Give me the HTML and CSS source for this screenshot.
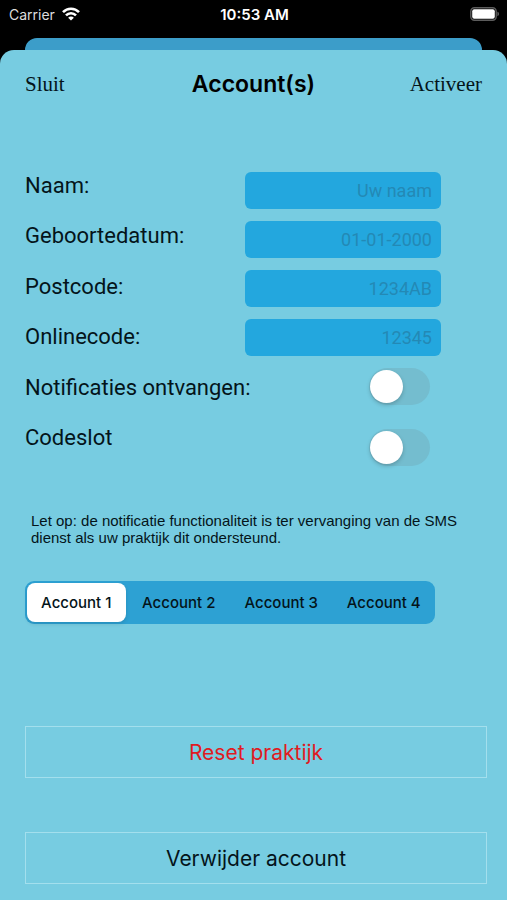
FILE: index.html
```
<!DOCTYPE html>
<html lang="nl">
<head>
  <meta charset="UTF-8">
  <meta name="viewport" content="width=device-width, initial-scale=1.0">
  <title>Account(s)</title>
  <link rel="stylesheet" href="styles.css">
</head>
<body>
  <div class="status-bar">
    <div class="carrier">
      <span>Carrier</span>
      <svg class="wifi" viewBox="0 0 18 14" width="18" height="14" fill="none" stroke="#fff" stroke-width="2.6">
        <path d="M1 5.2 C5.4 0.6 12.6 0.6 17 5.2" />
        <path d="M4 8.4 C6.8 5.5 11.2 5.5 14 8.4" />
        <path d="M9 13.6 L6.1 10.7 C7.7 9.2 10.3 9.2 11.9 10.7 Z" fill="#fff" stroke="none" />
      </svg>
    </div>
    <div class="time">10:53 AM</div>
    <svg class="battery" viewBox="0 0 30 14" width="30" height="14">
      <rect x="0.8" y="0.8" width="25.4" height="12.4" rx="3.6" fill="none" stroke="#5c5c5c" stroke-width="1.4" />
      <rect x="2.2" y="2.2" width="22.6" height="9.6" rx="2" fill="#fff" />
      <path d="M27.4 4.8 C29.6 5.4 29.6 8.6 27.4 9.2 Z" fill="#5c5c5c" />
    </svg>
  </div>

  <div class="sheet-behind"></div>

  <main class="sheet">
    <header class="nav">
      <button class="nav-btn" type="button">Sluit</button>
      <h1>Account(s)</h1>
      <button class="nav-btn nav-right" type="button">Activeer</button>
    </header>

    <form class="account-form">
      <div class="labels">
        <label for="naam">Naam:</label>
        <label for="geboortedatum">Geboortedatum:</label>
        <label for="postcode">Postcode:</label>
        <label for="onlinecode">Onlinecode:</label>
        <label for="notificaties">Notificaties ontvangen:</label>
        <label for="codeslot">Codeslot</label>
      </div>
      <div class="controls">
        <input class="field" type="text" id="naam" placeholder="Uw naam">
        <input class="field" type="text" id="geboortedatum" placeholder="01-01-2000">
        <input class="field" type="text" id="postcode" placeholder="1234AB">
        <input class="field" type="text" id="onlinecode" placeholder="12345">
        <div class="switches">
          <input class="switch" type="checkbox" id="notificaties">
          <input class="switch" type="checkbox" id="codeslot">
        </div>
      </div>
    </form>

    <p class="note">Let op: de notificatie functionaliteit is ter vervanging van de SMS dienst als uw praktijk dit ondersteund.</p>

    <div class="segments">
      <label class="segment"><input type="radio" name="account" checked><span>Account 1</span></label>
      <label class="segment"><input type="radio" name="account"><span>Account 2</span></label>
      <label class="segment"><input type="radio" name="account"><span>Account 3</span></label>
      <label class="segment"><input type="radio" name="account"><span>Account 4</span></label>
    </div>

    <div class="actions">
      <button class="action danger" type="button">Reset praktijk</button>
      <button class="action" type="button">Verwijder account</button>
    </div>
  </main>
</body>
</html>
```

FILE: styles.css
```
* {
  box-sizing: border-box;
}
body {
  margin: 0;
  min-height: 100vh;
  display: flex;
  flex-direction: column;
  font-family: Inter, sans-serif;
  background-color: #000;
  color: #04141a;
}
button, input {
  font-family: inherit;
  color: inherit;
}

/* Status bar */
.status-bar {
  display: grid;
  grid-template-columns: 1fr auto 1fr;
  align-items: center;
  height: 28px;
  margin-bottom: 10px;
  padding: 0 7px 0 9px;
  color: #fff;
  font-size: 14px;
}
.carrier {
  display: flex;
  align-items: center;
  gap: 7px;
  color: #ddd;
}
.time {
  font-size: 15px;
  font-weight: 600;
}
.battery {
  justify-self: end;
}

/* Sheets */
.sheet-behind {
  height: 12px;
  margin: 0 25px;
  background: #3c9dc9;
  border-radius: 12px 12px 0 0;
}
.sheet {
  flex: 1;
  padding: 16px 20px 15px 25px;
  background: #77cce1;
  border-radius: 14px 14px 0 0;
}
.nav {
  display: grid;
  grid-template-columns: 1fr auto 1fr;
  align-items: center;
  height: 36px;
  padding-right: 5px;
}
.nav h1 {
  margin: 0;
  font-size: 23px;
  font-weight: 600;
  color: #000;
}
.nav-btn {
  justify-self: start;
  padding: 0;
  border: none;
  background: none;
  font-family: "Liberation Serif", serif;
  font-size: 21px;
}
.nav-right {
  justify-self: end;
}

/* Form */
.account-form {
  display: flex;
  justify-content: space-between;
  margin-top: 70px;
  padding-right: 46px;
}
.labels {
  display: flex;
  flex-direction: column;
  justify-content: space-between;
  padding-bottom: 14px;
  font-family: Roboto, sans-serif;
  font-size: 22px;
  line-height: 28px;
  white-space: nowrap;
}
.labels label {
  width: 0;
}
.controls {
  display: flex;
  flex-direction: column;
  gap: 12px;
  width: 196px;
}
.field {
  width: 100%;
  height: 37px;
  padding: 0 9px;
  border: none;
  border-radius: 6px;
  background: #23a7de;
  font-family: Roboto, sans-serif;
  font-size: 18px;
  text-align: right;
}
.field::placeholder {
  color: #2389b5;
  opacity: 1;
}
.switches {
  display: flex;
  flex-direction: column;
  align-items: flex-end;
  gap: 24px;
  padding-right: 11px;
}
.switch {
  appearance: none;
  width: 61px;
  height: 37px;
  margin: 0;
  padding: 2px 1px;
  border-radius: 19px;
  background: #74bdcf;
  cursor: pointer;
}
.switch::before {
  content: "";
  display: block;
  width: 33px;
  height: 33px;
  border-radius: 50%;
  background: #fff;
  box-shadow: 0 2px 4px rgba(0,0,0,0.2);
}
.switch:checked {
  background: #34c759;
}
.switch:checked::before {
  margin-left: auto;
}

.note {
  max-width: 440px;
  margin: 46px 0 35px;
  padding-left: 6px;
  font-family: "Liberation Sans", sans-serif;
  font-size: 15px;
  line-height: 17px;
}

/* Account picker */
.segments {
  display: grid;
  grid-template-columns: repeat(4, 1fr);
  column-gap: 4px;
  height: 43px;
  margin-right: 52px;
  padding: 2px;
  border-radius: 9px;
  background: #2da1d3;
}
.segment {
  display: flex;
  cursor: pointer;
}
.segment input {
  appearance: none;
  width: 0;
  margin: 0;
}
.segment span {
  flex: 1;
  display: flex;
  align-items: center;
  justify-content: center;
  border-radius: 8px;
  font-size: 15px;
  font-weight: 500;
}
.segment input:checked + span {
  background: #fff;
  box-shadow: 0 2px 4px rgba(0,0,0,0.12);
}

/* Bottom buttons */
.actions {
  display: flex;
  flex-direction: column;
  gap: 54px;
  margin-top: 102px;
}
.action {
  height: 52px;
  border: 1px solid #a3dfed;
  background: none;
  font-size: 21px;
}
.danger {
  color: #e01b22;
}
```
